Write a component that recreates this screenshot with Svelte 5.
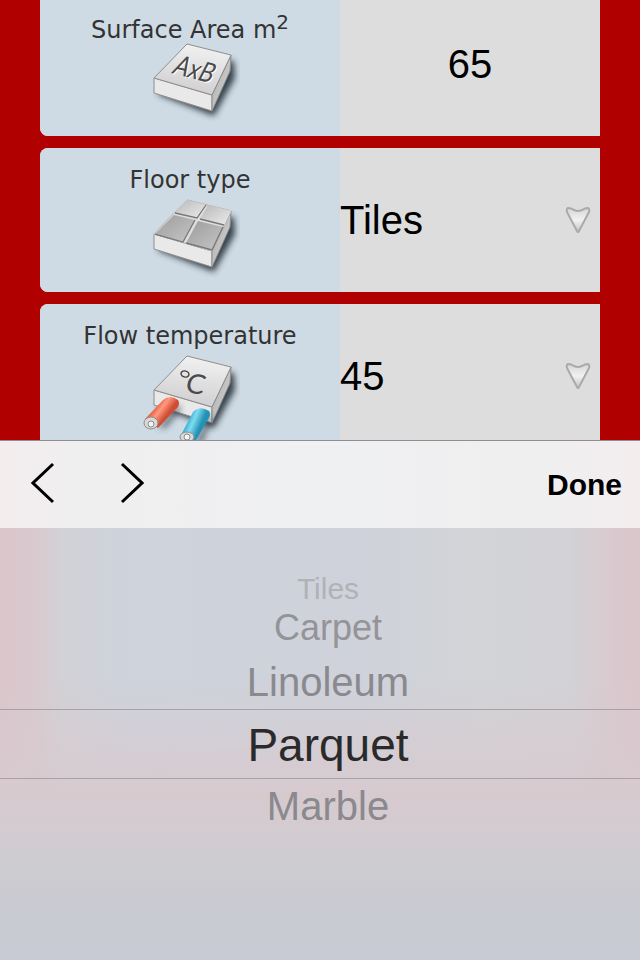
<script>
  const floorTypes = ['Tiles', 'Carpet', 'Linoleum', 'Parquet', 'Marble'];
  const temperatures = [35, 40, 45, 50, 55];

  let area = $state('65');
  let floor = $state('Tiles');
  let temperature = $state(45);
  let picked = $state(3);
</script>

{#snippet block(id)}
  <defs>
    <linearGradient id="{id}-top" x1="0.6" y1="0" x2="0.4" y2="1">
      <stop offset="0" stop-color="#f2f2f2" />
      <stop offset="1" stop-color="#cfcdcf" />
    </linearGradient>
    <linearGradient id="{id}-side" x1="0" y1="0" x2="1" y2="1">
      <stop offset="0" stop-color="#a9a9a9" />
      <stop offset="1" stop-color="#dadada" />
    </linearGradient>
    <filter id="{id}-blur" x="-20%" y="-20%" width="140%" height="140%">
      <feGaussianBlur stdDeviation="3" />
    </filter>
  </defs>
  <path d="M17 54 L74 76 L95 38 L94 21 L60 20Z" fill="#26303a" opacity="0.9" filter="url(#{id}-blur)" />
  <g stroke="#8e8e8e" stroke-width="1" stroke-linejoin="round">
    <path d="M14 38 L72 55 L72 71 L14 53Z" fill="#e9e9e9" />
    <path d="M72 55 L91 15 L90 31 L72 71Z" fill="url(#{id}-side)" />
    <path d="M47 4 L91 15 L72 55 L14 38Z" fill="url(#{id}-top)" />
  </g>
{/snippet}

{#snippet arrow()}
  <svg class="arrow" width="26" height="28" viewBox="0 0 26 28" aria-hidden="true">
    <defs>
      <linearGradient id="arrow-fill" x1="0" y1="0" x2="0" y2="1">
        <stop offset="0" stop-color="#d6d6d6" />
        <stop offset="0.5" stop-color="#f1f1f1" />
        <stop offset="1" stop-color="#c4c4c4" />
      </linearGradient>
    </defs>
    <path d="M3 2 Q6 2 9 4 Q13 6 17 4 Q20 2 23 2 Q25 3 24 6 L14 25 Q13 27 12 25 L2 6 Q1 3 3 2Z" fill="url(#arrow-fill)" stroke="#aaa" stroke-width="2" stroke-linejoin="round" />
  </svg>
{/snippet}

<div class="screen">
  <form class="fields">
    <div class="card">
      <div class="info">
        <label for="area">Surface Area m<sup>2</sup></label>
        <svg width="100" height="88" viewBox="0 0 100 88" aria-hidden="true">
          {@render block('area')}
          <text class="engraved" font-size="22" fill="#fff" transform="matrix(0.97 0.25 -0.6 1.15 32 34)">AxB</text>
          <text class="engraved" font-size="22" fill="#4a4a4a" transform="matrix(0.97 0.25 -0.6 1.15 31 33)">AxB</text>
        </svg>
      </div>
      <div class="value">
        <input id="area" type="text" inputmode="numeric" bind:value={area} />
      </div>
    </div>

    <div class="card">
      <div class="info">
        <label for="floor">Floor type</label>
        <svg width="100" height="88" viewBox="0 0 100 88" aria-hidden="true">
          {@render block('floor')}
          <defs>
            <linearGradient id="tile-dark" x1="0" y1="0" x2="1" y2="1">
              <stop offset="0" stop-color="#9c9c9c" />
              <stop offset="1" stop-color="#c6c6c6" />
            </linearGradient>
            <linearGradient id="tile-light" x1="0" y1="0" x2="1" y2="1">
              <stop offset="0" stop-color="#b8b8b8" />
              <stop offset="1" stop-color="#ececec" />
            </linearGradient>
          </defs>
          <path d="M47 4 L91 15 L72 55 L14 38Z" fill="#dedede" stroke="#c4c4c4" />
          <path d="M47 4 L66 9 L57 22 L35 17Z" fill="url(#tile-light)" />
          <path d="M68 9 L91 15 L84 29 L60 23Z" fill="url(#tile-light)" />
          <path d="M34 19 L55 24 L43 46 L15 38Z" fill="url(#tile-dark)" />
          <path d="M58 25 L83 31 L72 54 L46 47Z" fill="url(#tile-dark)" />
          <path d="M35 17 L57 22 L66 9 M60 23 L84 29 M15 38 L43 46 L55 24 M46 47 L72 54 L83 31" fill="none" stroke="#777" stroke-width="1.3" />
        </svg>
      </div>
      <div class="value">
        <select id="floor" bind:value={floor}>
          {#each floorTypes as type}
            <option value={type}>{type}</option>
          {/each}
        </select>
        {@render arrow()}
      </div>
    </div>

    <div class="card">
      <div class="info">
        <label for="flow">Flow temperature</label>
        <svg width="100" height="92" viewBox="0 0 100 92" aria-hidden="true">
          {@render block('flow')}
          <defs>
            <linearGradient id="pipe-hot" gradientUnits="userSpaceOnUse" x1="14" y1="55" x2="26" y2="64">
              <stop offset="0" stop-color="#e0573a" />
              <stop offset="0.45" stop-color="#ff9a80" />
              <stop offset="1" stop-color="#cf4d33" />
            </linearGradient>
            <linearGradient id="pipe-cold" gradientUnits="userSpaceOnUse" x1="46" y1="69" x2="60" y2="75">
              <stop offset="0" stop-color="#2aa6cc" />
              <stop offset="0.45" stop-color="#7fdcf2" />
              <stop offset="1" stop-color="#2592b5" />
            </linearGradient>
          </defs>
          <ellipse cx="45" cy="22" rx="4" ry="3" fill="none" stroke="#444" stroke-width="1.5" transform="rotate(15 45 22)" />
          <text class="engraved" font-size="28" fill="#4a4a4a" transform="matrix(1 0.15 -0.25 0.95 44 40)">C</text>
          <path d="M18 76 L38 52 L41 58 L26 76Z M55 90 L70 62 L72 68 L62 92Z" fill="#26303a" opacity="0.6" filter="url(#flow-blur)" />
          <path d="M23 48 Q30 42 38 48 Q40 51 38 55 L18 76 L5 67Z" fill="url(#pipe-hot)" />
          <path d="M53 60 Q60 53 69 59 Q71 62 69 66 L55 90 L41 83Z" fill="url(#pipe-cold)" />
          <g fill="#d9d9d9" stroke="#8c8c8c">
            <ellipse cx="11" cy="71" rx="7" ry="6" />
            <ellipse cx="11" cy="72" rx="3" ry="3" fill="#f4f4f4" />
            <ellipse cx="47" cy="85" rx="7" ry="5" />
            <ellipse cx="47" cy="85" rx="3" ry="3" fill="#f4f4f4" />
          </g>
        </svg>
      </div>
      <div class="value">
        <select id="flow" bind:value={temperature}>
          {#each temperatures as t}
            <option value={t}>{t}</option>
          {/each}
        </select>
        {@render arrow()}
      </div>
    </div>
  </form>

  <section class="sheet">
    <div class="toolbar">
      <button class="step" type="button" aria-label="Previous field">
        <svg width="24" height="44" viewBox="0 0 24 44"><path d="M22 3 L2 22 L22 41" /></svg>
      </button>
      <button class="step" type="button" aria-label="Next field">
        <svg width="24" height="44" viewBox="0 0 24 44"><path d="M2 3 L22 22 L2 41" /></svg>
      </button>
      <button class="done" type="button">Done</button>
    </div>
    <div class="wheel" role="listbox" aria-label="Floor type">
      {#each floorTypes as type, i}
        <button
          type="button"
          role="option"
          aria-selected={i === picked}
          class="item"
          class:selected={i === picked}
          class:far={Math.abs(i - picked) === 2}
          class:edge={Math.abs(i - picked) > 2}
          onclick={() => (picked = i)}>{type}</button>
      {/each}
    </div>
  </section>
</div>

<style>
  :global(body) {
    margin: 0;
  }

  .screen {
    display: flex;
    flex-direction: column;
    height: 100vh;
    overflow: hidden;
    background: #b00000;
    font-family: 'Liberation Sans', Arial, sans-serif;
  }

  .fields {
    flex: 1;
    min-height: 0;
    overflow: hidden;
    display: flex;
    flex-direction: column;
    gap: 12px;
    margin-top: -8px;
    padding: 0 40px;
  }

  .card {
    flex: none;
    display: grid;
    grid-template-columns: 15fr 13fr;
    height: 144px;
    border-radius: 8px 0 0 8px;
    overflow: hidden;
    background: #ddd;
  }

  .info {
    display: flex;
    flex-direction: column;
    align-items: center;
    padding-top: 18px;
    background: #cfdbe4;
  }

  .info svg {
    flex: none;
  }

  label {
    height: 30px;
    font: 24px 'DejaVu Sans', Verdana, sans-serif;
    color: #333;
    white-space: nowrap;
  }

  sup {
    font-size: 20px;
  }

  .engraved {
    font-family: Lato, 'Open Sans', sans-serif;
  }

  .value {
    position: relative;
    display: flex;
  }

  input,
  select {
    width: 100%;
    margin: 0;
    padding: 0;
    border: 0;
    border-radius: 0;
    outline: 0;
    background: none;
    color: #000;
    font: 40px 'Liberation Sans', Arial, sans-serif;
    appearance: none;
  }

  input {
    text-align: center;
  }

  .arrow {
    position: absolute;
    right: 9px;
    top: 50%;
    translate: 0 -50%;
    pointer-events: none;
  }

  button {
    margin: 0;
    padding: 0;
    border: 0;
    background: none;
    color: #000;
    font-family: inherit;
  }

  .toolbar {
    box-sizing: border-box;
    display: flex;
    align-items: center;
    gap: 65px;
    height: 88px;
    padding: 0 18px 0 31px;
    border-top: 1px solid #8f8c90;
    background: linear-gradient(90deg, #f3edee, #f0eff0 12%, #eff0f2 50%, #f0eff0 85%, #f3edee);
  }

  .step svg {
    display: block;
    margin-bottom: 4px;
    fill: none;
    stroke: #000;
    stroke-width: 3;
  }

  .done {
    margin-left: auto;
    font-size: 30px;
    font-weight: 700;
  }

  .wheel {
    box-sizing: border-box;
    display: flex;
    flex-direction: column;
    height: 432px;
    padding-top: 48px;
    background:
      linear-gradient(180deg, transparent 35%, #d7cacf 62%, #d2ccd1 71%, #cdccd1 78%, #cacbd1 86%, #c8cbd4),
      linear-gradient(90deg, #dac6cb, #d9c9ce 5%, #d2d2d6 10%, #ced3dc 20%, #cfd2db 55%, #d2d4d7 75%, #d3d2d6 89%, #d9c9ce 96%, #dac6cb);
  }

  .item {
    box-sizing: border-box;
    flex: none;
    height: 54px;
    padding-left: 16px;
    color: #8a898d;
    font-size: 40px;
    line-height: 54px;
  }

  .item.far {
    color: #949498;
    font-size: 36px;
  }

  .item.edge {
    height: 25px;
    color: #b1b1b6;
    font-size: 30px;
    line-height: 25px;
  }

  .item.selected {
    height: 70px;
    border-top: 1px solid #a5a3a8;
    border-bottom: 1px solid #a5a3a8;
    color: #2a2a2b;
    font-size: 46px;
    line-height: 70px;
  }
</style>
